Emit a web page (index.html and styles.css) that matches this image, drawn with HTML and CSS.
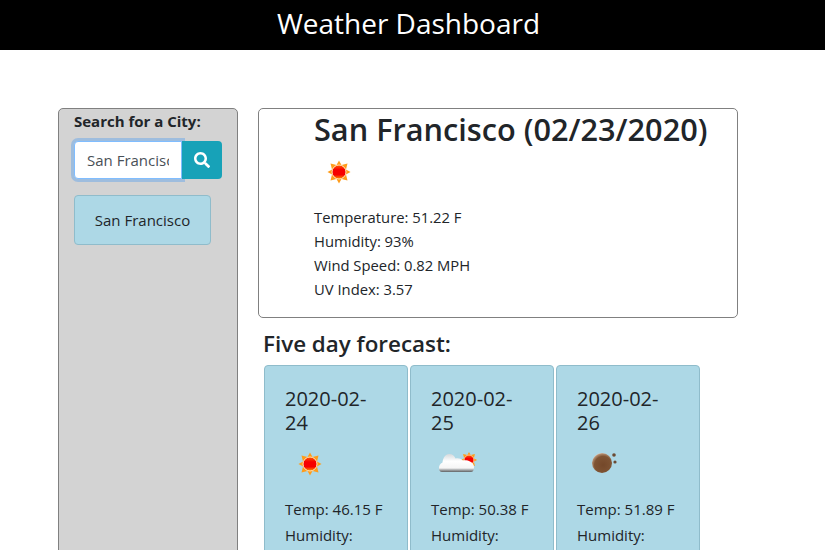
FILE: index.html
```html
<!DOCTYPE html>
<html lang="en">
<head>
    <meta charset="UTF-8">
    <title>Weather Dashboard</title>
    <link rel="stylesheet" href="styles.css">
</head>
<body>
<svg class="icon-defs" width="0" height="0">
    <defs>
        <linearGradient id="sun-fill" x1="0" y1="0" x2="0" y2="1">
            <stop offset="0" stop-color="#ff5a00"/>
            <stop offset="0.35" stop-color="#f60000"/>
            <stop offset="0.7" stop-color="#f60000"/>
            <stop offset="1" stop-color="#ff9a00"/>
        </linearGradient>
        <linearGradient id="cloud-fill" x1="0" y1="0" x2="0" y2="1">
            <stop offset="0" stop-color="#d5d9dc"/>
            <stop offset="0.4" stop-color="#fff"/>
            <stop offset="0.78" stop-color="#f6f6f6"/>
            <stop offset="0.88" stop-color="#a9acae"/>
            <stop offset="1" stop-color="#5f6264"/>
        </linearGradient>
        <radialGradient id="planet-fill" cx="0.56" cy="0.6" r="0.62">
            <stop offset="0" stop-color="#74482a"/>
            <stop offset="0.7" stop-color="#7f5434"/>
            <stop offset="0.9" stop-color="#b08a6c"/>
            <stop offset="1" stop-color="#e2c8b4"/>
        </radialGradient>
        <g id="sun">
            <g fill="#ff9c1a">
                <path d="M25 13.500l3 5.500h-6z"/>
                <path d="M25 36.500l3-5.500h-6z"/>
                <path d="M13.500 25l5.500-3v6z"/>
                <path d="M36.500 25l-5.500-3v6z"/>
                <path d="M16.500 16.500l6 1.500-4.500 4.500z"/>
                <path d="M33.500 16.500l-6 1.500 4.500 4.500z"/>
                <path d="M16.500 33.500l6-1.500-4.500-4.500z"/>
                <path d="M33.500 33.500l-6-1.500 4.500-4.500z"/>
            </g>
            <circle cx="25" cy="25" r="7" fill="url(#sun-fill)" stroke="#ffe3b8" stroke-width="1"/>
        </g>
    </defs>
</svg>

<header class="top-bar">
    <h1>Weather Dashboard</h1>
</header>

<div class="layout">
    <aside class="sidebar">
        <label class="search-label" for="city-input">Search for a City:</label>
        <form class="search-form">
            <input type="text" id="city-input" class="search-input" value="San Francisco">
            <button type="button" class="search-btn" aria-label="Search">
                <svg class="search-icon" viewBox="0 0 512 512"><path fill="currentColor" d="M505 442.700L405.300 343c-4.500-4.500-10.600-7-17-7H372c27.600-35.300 44-79.700 44-128C416 93.100 322.900 0 208 0S0 93.100 0 208s93.100 208 208 208c48.300 0 92.700-16.400 128-44v16.300c0 6.400 2.500 12.500 7 17l99.700 99.700c9.400 9.400 24.600 9.400 33.900 0l28.300-28.300c9.400-9.400 9.400-24.600.1-34zM208 336c-70.700 0-128-57.200-128-128 0-70.700 57.200-128 128-128 70.700 0 128 57.200 128 128 0 70.700-57.200 128-128 128z"/></svg>
            </button>
        </form>
        <button type="button" class="city-btn">San Francisco</button>
    </aside>

    <main class="content">
        <section class="today">
            <h2 class="today-title">San Francisco (02/23/2020)</h2>
            <svg class="weather-icon" viewBox="0 0 50 50"><use href="#sun"/></svg>
            <p class="today-line">Temperature: 51.22 F</p>
            <p class="today-line">Humidity: 93%</p>
            <p class="today-line">Wind Speed: 0.82 MPH</p>
            <p class="today-line">UV Index: 3.57</p>
        </section>

        <h3 class="forecast-title">Five day forecast:</h3>
        <div class="forecast">
            <div class="day-card">
                <h4 class="day-date">2020-02-24</h4>
                <svg class="weather-icon" viewBox="0 0 50 50"><use href="#sun"/></svg>
                <p class="day-line">Temp: 46.15 F</p>
                <p class="day-line">Humidity:<br>89%</p>
            </div>
            <div class="day-card">
                <h4 class="day-date">2020-02-25</h4>
                <svg class="weather-icon" viewBox="0 0 50 50">
                    <use href="#sun" transform="translate(20.500 3.500) scale(0.700)"/>
                    <path fill="url(#cloud-fill)" d="M11 33c-2 0-3-1.500-3-4 0-2.500 1.200-4.500 3.500-5.500 .5-4.500 3-8.500 6.500-8.500 3.500 0 5.500 2 6.500 4.500 3-.5 5.500 0 7.500 2 2-.5 5.500 0 7 1 2.500 1 4 3 4 5.500 0 3-1 5-3 5z"/>
                </svg>
                <p class="day-line">Temp: 50.38 F</p>
                <p class="day-line">Humidity:<br>66%</p>
            </div>
            <div class="day-card">
                <h4 class="day-date">2020-02-26</h4>
                <svg class="weather-icon" viewBox="0 0 50 50">
                    <circle cx="25" cy="24" r="10" fill="url(#planet-fill)"/>
                    <circle cx="37" cy="16" r="1.800" fill="#6b4a33"/>
                    <circle cx="38" cy="23" r="1.600" fill="#6b4a33"/>
                </svg>
                <p class="day-line">Temp: 51.89 F</p>
                <p class="day-line">Humidity:<br>75%</p>
            </div>
        </div>
    </main>
</div>
</body>
</html>
```

FILE: styles.css
```css
* {
    box-sizing: border-box;
}

html, body {
    margin: 0;
    overflow: hidden;
    height: 550px;
}

body {
    background: #fff;
    color: #212529;
    font-family: "Open Sans", "Noto Sans", sans-serif;
    font-size: 14.8px;
    line-height: 24px;
}

.icon-defs {
    position: absolute;
}

/* Header */
.top-bar {
    height: 50px;
    background: #000;
    color: #fff;
    padding-right: 8px;
    text-align: center;
}

.top-bar h1 {
    margin: 0;
    font-size: 28px;
    font-weight: 400;
    line-height: 46px;
}

.layout {
    display: flex;
    gap: 20px;
    margin: 58px 0 0 58px;
}

/* Sidebar */
.sidebar {
    width: 180px;
    height: 700px;
    padding: 0 15px;
    background: #d3d3d3;
    border: 1px solid #808080;
    border-radius: 5px;
}

.search-label {
    display: block;
    font-size: 15px;
    font-weight: 700;
    line-height: 24px;
    margin-bottom: 8px;
}

.search-form {
    display: flex;
    width: 148px;
    margin-bottom: 16px;
}

.search-input {
    width: 108px;
    height: 38px;
    padding: 6px 12px;
    border: 1px solid #80bdff;
    border-radius: 4px 0 0 4px;
    box-shadow: 0 0 0 3px rgba(0, 123, 255, 0.25);
    outline: none;
    color: #495057;
    font-family: inherit;
    font-size: 15px;
}

.search-btn {
    display: flex;
    align-items: center;
    justify-content: center;
    width: 40px;
    height: 38px;
    padding: 0;
    background: #17a2b8;
    border: none;
    border-radius: 0 4px 4px 0;
    color: #fff;
}

.search-icon {
    width: 16px;
    height: 16px;
}

.city-btn {
    display: block;
    width: 137px;
    height: 50px;
    padding: 0;
    background: #add8e6;
    border: 1px solid #8fbccb;
    border-radius: 4px;
    color: #212529;
    font-family: inherit;
    font-size: 15px;
}

/* Main column */
.content {
    width: 480px;
}

.today {
    height: 210px;
    padding: 0 0 0 55px;
    border: 1px solid #808080;
    border-radius: 5px;
}

.today-title {
    margin: 0;
    font-size: 30.7px;
    font-weight: 600;
    line-height: 38px;
    padding-top: 1px;
    white-space: nowrap;
}

.weather-icon {
    display: block;
    width: 50px;
    height: 50px;
}

.today-title + .weather-icon {
    margin-top: -1px;
    margin-bottom: 8px;
}

.today-line {
    margin: 0;
}

.forecast-title {
    margin: 11px 0 7px 5px;
    font-size: 22.4px;
    font-weight: 600;
    line-height: 29px;
}

.forecast {
    display: flex;
    gap: 2px;
    margin-left: 6px;
}

.day-card {
    width: 144px;
    height: 300px;
    padding: 21px 20px;
    background: #add8e6;
    border: 1px solid #8fbccb;
    border-radius: 4px;
}

.day-date {
    margin: 0 0 4px;
    font-size: 20px;
    font-weight: 500;
    line-height: 24px;
}

.day-line {
    margin: 2px 0 0;
    font-size: 15px;
    font-weight: 500;
    line-height: 24px;
}

.weather-icon + .day-line {
    margin-top: 8px;
}
```
